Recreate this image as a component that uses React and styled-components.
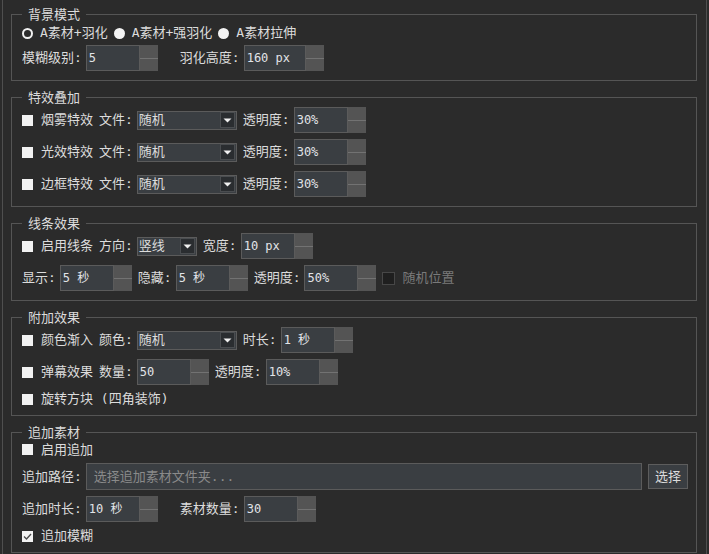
import React from "react";
import styled, { createGlobalStyle } from "styled-components";

const Global = createGlobalStyle`
  html, body { margin: 0; padding: 0; background: #2b2b2b; }
  body {
    font-family: "DejaVu Sans Mono", "Noto Sans CJK SC", monospace;
    font-size: 13px;
    color: #dcdcdc;
  }
  * { box-sizing: border-box; }
`;

const Frame = styled.div`
  margin-left: 2px;
  width: 705px;
  height: 554px;
  overflow: hidden;
  border-left: 1px solid #4f4f4f;
  border-right: 1px solid #4f4f4f;
  padding: 6px 9px 0 8px;
`;

const Group = styled.fieldset`
  margin: 0 0 8px;
  padding: 0 8px ${(p) => p.$pb ?? 9}px 10px;
  border: 1px solid #555555;
  min-width: 0;
`;

const Title = styled.legend`
  padding: 0 6px;
  margin: 0;
  height: 17px;
  line-height: 17px;
  font-size: 13px;
  color: #dcdcdc;
`;

const Body = styled.div`
  display: flex;
  flex-direction: column;
  gap: ${(p) => p.$gap ?? 6}px;
  padding-top: 1px;
`;

const Row = styled.div`
  display: flex;
  align-items: center;
  height: ${(p) => p.$h ?? 26}px;
  gap: 6px;
  line-height: 16px;
  white-space: nowrap;
`;

const Label = styled.span`
  margin-right: -2px;
  margin-left: ${(p) => p.$ml ?? 0}px;
  color: ${(p) => (p.$dim ? "#7a7a7a" : "#dcdcdc")};
`;

const CheckItem = styled.span`
  display: inline-flex;
  align-items: center;
  gap: ${(p) => (p.$disabled ? 7 : 8)}px;
  color: ${(p) => (p.$disabled ? "#7a7a7a" : "#dcdcdc")};
`;

const Box = styled.span`
  width: ${(p) => (p.$disabled ? 13 : 11)}px;
  height: ${(p) => (p.$disabled ? 13 : 11)}px;
  flex: none;
  display: flex;
  align-items: center;
  justify-content: center;
  background: ${(p) => (p.$disabled ? "#1f1f1f" : "#f2f2f2")};
  border: ${(p) => (p.$disabled ? "1px solid #474747" : "none")};
`;

const Check = ({ children, checked, disabled }) => (
  <CheckItem $disabled={disabled}>
    <Box $disabled={disabled}>
      {checked && (
        <svg width="11" height="11" viewBox="0 0 11 11">
          <path d="M2 5.5 L4.5 8 L9 3" fill="none" stroke="#4a4a4a" strokeWidth="1.3" />
        </svg>
      )}
    </Box>
    {children}
  </CheckItem>
);

const RadioGroup = styled.div`
  display: flex;
  align-items: center;
  gap: 6px;
  height: 18px;
  line-height: 16px;
`;

const RadioItem = styled.span`
  display: inline-flex;
  align-items: center;
  gap: 7px;
`;

const Dot = styled.span`
  width: 11px;
  height: 11px;
  border-radius: 50%;
  flex: none;
  background: ${(p) => (p.$ring ? "transparent" : "#f4f4f4")};
  border: ${(p) => (p.$ring ? "2px solid #f0f0f0" : "none")};
`;

const Radio = ({ ring, children }) => (
  <RadioItem>
    <Dot $ring={ring} />
    {children}
  </RadioItem>
);

const SpinBox = styled.div`
  display: flex;
  width: ${(p) => p.$w ?? 72}px;
  height: 26px;
  flex: none;
`;

const SpinInput = styled.div`
  flex: 1;
  display: flex;
  align-items: center;
  padding-left: 2px;
  background: #3a3e42;
  border: 1px solid #5b5b5b;
  font-family: "DejaVu Sans Mono", "Noto Sans CJK SC", monospace;
  font-size: 12px;
  color: #e2e4e8;
`;

const SpinBtns = styled.div`
  width: 18px;
  display: flex;
  flex-direction: column;
  background: #545454;
`;

const SpinBtn = styled.div`
  flex: 1;
  & + & {
    border-top: 1px solid #727272;
  }
`;

const Spin = ({ value, w }) => (
  <SpinBox $w={w}>
    <SpinInput>{value}</SpinInput>
    <SpinBtns>
      <SpinBtn />
      <SpinBtn />
    </SpinBtns>
  </SpinBox>
);

const ComboBox = styled.div`
  display: flex;
  align-items: center;
  width: ${(p) => p.$w ?? 100}px;
  height: 19px;
  flex: none;
  padding: 0 1px 0 1px;
  background: #3a3e42;
  border: 1px solid #5b5b5b;
`;

const ComboText = styled.span`
  flex: 1;
`;

const ComboArrow = styled.span`
  width: 15px;
  height: 16px;
  display: flex;
  align-items: center;
  justify-content: center;
  background: #2a2d30;
  border: 1px solid #4a4d50;
`;

const Combo = ({ value, w }) => (
  <ComboBox $w={w}>
    <ComboText>{value}</ComboText>
    <ComboArrow>
      <svg width="9" height="5" viewBox="0 0 9 5">
        <path d="M0.5 0.5 L8.5 0.5 L4.5 4.5 Z" fill="#f0f0f0" />
      </svg>
    </ComboArrow>
  </ComboBox>
);

const LineEdit = styled.div`
  flex: 1;
  height: 27px;
  display: flex;
  align-items: center;
  padding-left: 7px;
  background: #3a3e42;
  border: 1px solid #5b5b5b;
  color: #8a8a8a;
`;

const Button = styled.div`
  width: 40px;
  height: 25px;
  display: flex;
  align-items: center;
  justify-content: center;
  background: #3a3e42;
  border: 1px solid #5d5d5d;
  color: #dcdcdc;
`;

export default function App() {
  return (
    <>
      <Global />
      <Frame>
        <Group>
          <Title>背景模式</Title>
          <Body $gap={3}>
            <RadioGroup>
              <Radio ring>A素材+羽化</Radio>
              <Radio>A素材+强羽化</Radio>
              <Radio>A素材拉伸</Radio>
            </RadioGroup>
            <Row>
              <Label>模糊级别:</Label>
              <Spin value="5" />
              <Label $ml={16}>羽化高度:</Label>
              <Spin value="160 px" w={80} />
            </Row>
          </Body>
        </Group>

        <Group>
          <Title>特效叠加</Title>
          <Body>
            {["烟雾特效", "光效特效", "边框特效"].map((name) => (
              <Row key={name}>
                <Check>{name}</Check>
                <Label>文件:</Label>
                <Combo value="随机" />
                <Label>透明度:</Label>
                <Spin value="30%" />
              </Row>
            ))}
          </Body>
        </Group>

        <Group>
          <Title>线条效果</Title>
          <Body>
            <Row>
              <Check>启用线条</Check>
              <Label>方向:</Label>
              <Combo value="竖线" w={60} />
              <Label>宽度:</Label>
              <Spin value="10 px" />
            </Row>
            <Row>
              <Label>显示:</Label>
              <Spin value="5 秒" />
              <Label>隐藏:</Label>
              <Spin value="5 秒" />
              <Label>透明度:</Label>
              <Spin value="50%" />
              <Check disabled>随机位置</Check>
            </Row>
          </Body>
        </Group>

        <Group $pb={8}>
          <Title>附加效果</Title>
          <Body>
            <Row>
              <Check>颜色渐入</Check>
              <Label>颜色:</Label>
              <Combo value="随机" />
              <Label>时长:</Label>
              <Spin value="1 秒" />
            </Row>
            <Row>
              <Check>弹幕效果</Check>
              <Label>数量:</Label>
              <Spin value="50" />
              <Label>透明度:</Label>
              <Spin value="10%" />
            </Row>
            <Row $h={16}>
              <Check>旋转方块 (四角装饰)</Check>
            </Row>
          </Body>
        </Group>

        <Group $pb={8}>
          <Title>追加素材</Title>
          <Body>
            <Row $h={15}>
              <Check>启用追加</Check>
            </Row>
            <Row $h={27}>
              <Label>追加路径:</Label>
              <LineEdit>选择追加素材文件夹...</LineEdit>
              <Button>选择</Button>
            </Row>
            <Row>
              <Label>追加时长:</Label>
              <Spin value="10 秒" />
              <Label $ml={16}>素材数量:</Label>
              <Spin value="30" />
            </Row>
            <Row $h={16}>
              <Check checked>追加模糊</Check>
            </Row>
          </Body>
        </Group>
      </Frame>
    </>
  );
}
